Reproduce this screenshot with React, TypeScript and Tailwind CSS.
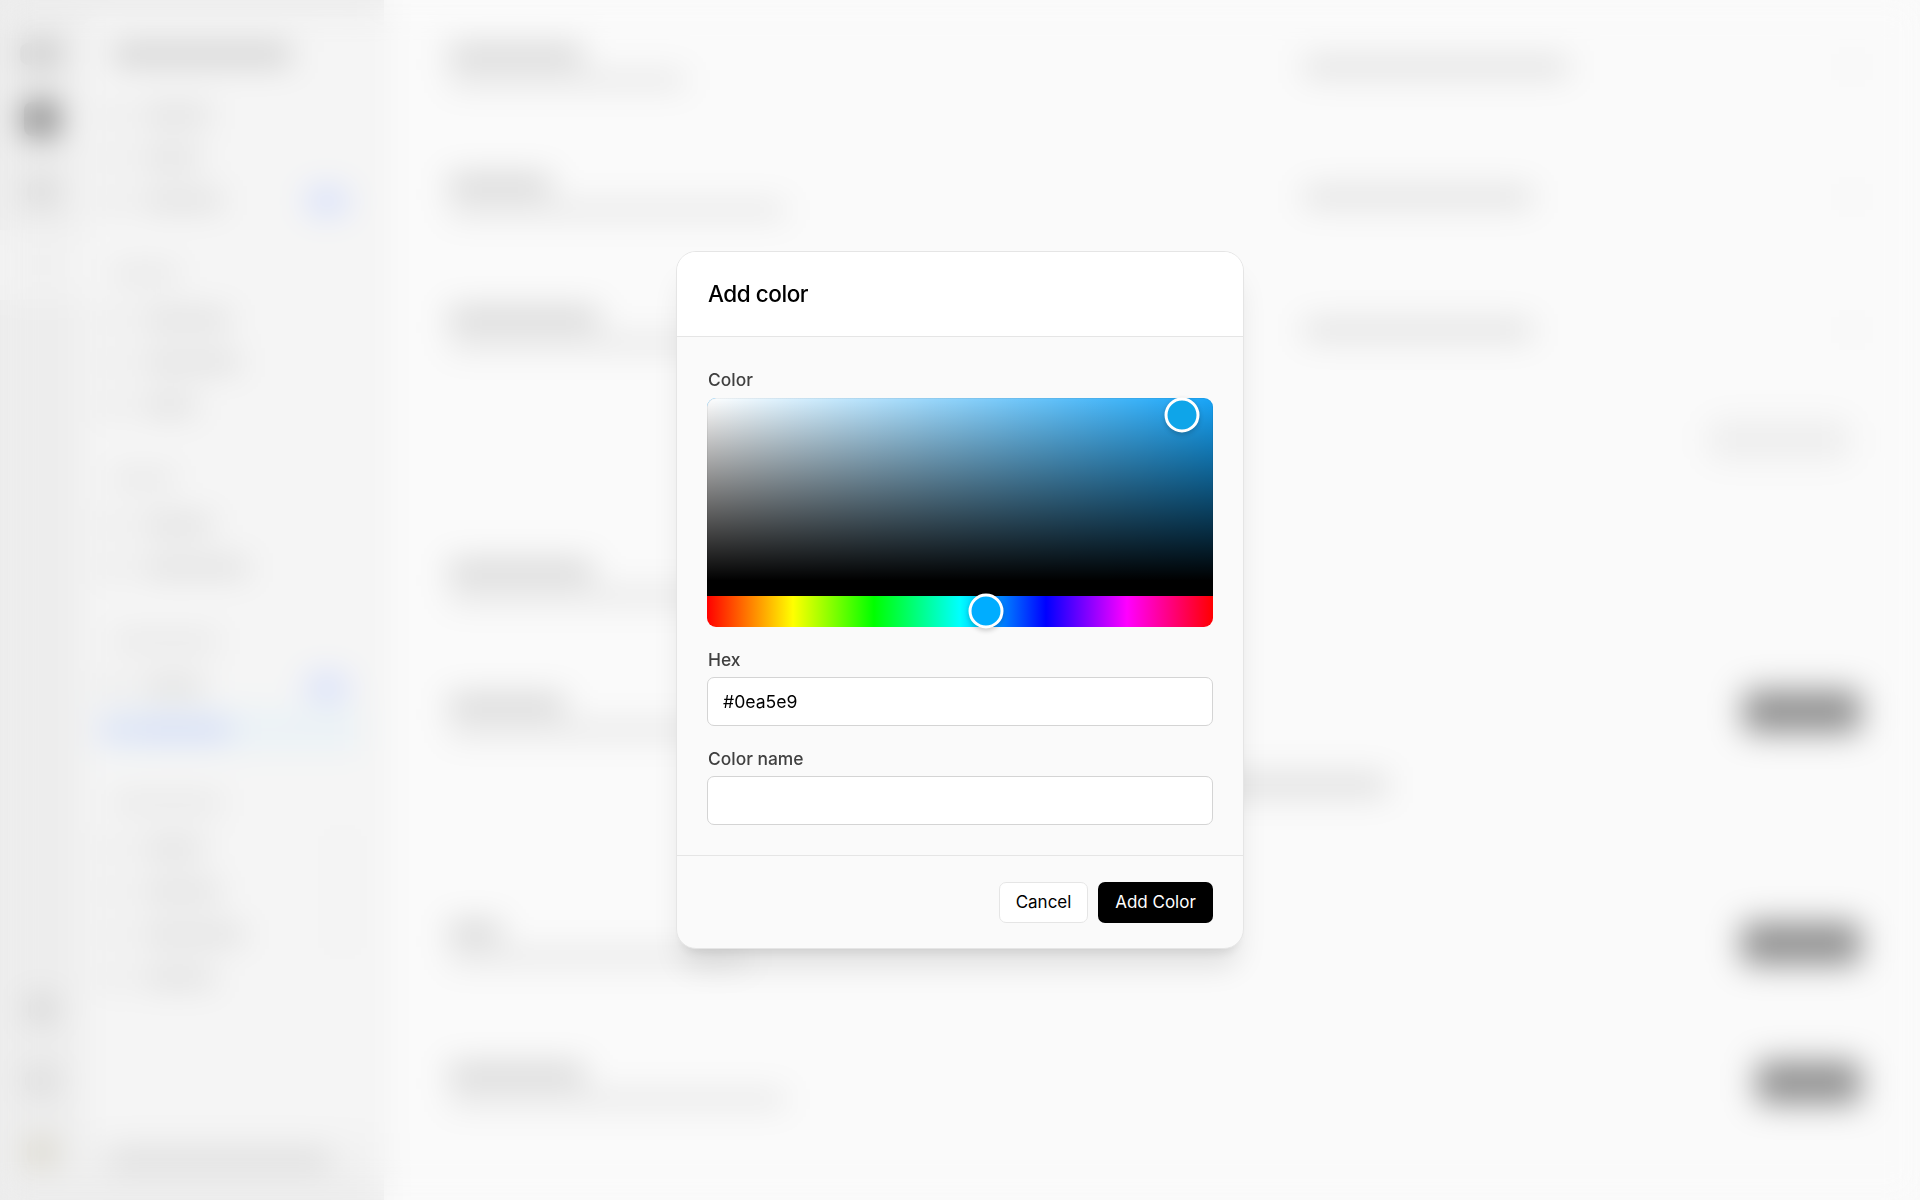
import { useState } from 'react'

const navGroups: { header?: number; items: { w: number; badge?: boolean; active?: boolean; arrow?: boolean }[] }[] = [
  { items: [{ w: 68 }, { w: 58 }, { w: 80, badge: true }] },
  { header: 66, items: [{ w: 88 }, { w: 98 }, { w: 54 }] },
  { header: 62, items: [{ w: 70 }, { w: 106 }] },
  { header: 106, items: [{ w: 62, badge: true }, { w: 86, active: true }] },
  { header: 110, items: [{ w: 62, arrow: true }, { w: 78, arrow: true }, { w: 102, arrow: true }, { w: 72 }] },
]

function RailIcon({ className }: { className: string }) {
  return <div className={`rounded-lg ${className}`} />
}

function Sidebar() {
  return (
    <aside className="flex h-full w-[384px] shrink-0 bg-[#ededed]">
      {/* Icon rail */}
      <div className="flex w-[82px] shrink-0 flex-col items-center pt-[43px] pb-[35px]">
        <RailIcon className="h-[22px] w-[42px] bg-[#c3c3c3]" />
        <RailIcon className="mt-[37px] h-[34px] w-[34px] bg-[#7c7c7c]" />
        <RailIcon className="mt-[44px] h-[24px] w-[28px] bg-[#d2d2d2]" />
        <div className="mt-[26px] flex h-[70px] w-full items-center justify-center bg-[#f2f2f2]">
          <div className="h-3 w-3 bg-[#e0e0e0]" />
        </div>
        <div className="flex-1" />
        <RailIcon className="h-[24px] w-[26px] bg-[#cecece]" />
        <RailIcon className="mt-[48px] h-[24px] w-[32px] bg-[#d8d8d8]" />
        <RailIcon className="mt-[46px] h-[26px] w-[28px] bg-[#d6d2c4]" />
      </div>

      {/* Settings nav */}
      <div className="mt-[17px] mr-[5px] mb-[25px] flex flex-1 flex-col rounded-2xl bg-[#f5f5f5]">
        <div className="flex h-[76px] items-center pb-[2px] pl-[31px]">
          <div className="h-[19px] w-[178px] bg-[#cccccc]" />
        </div>
        {navGroups.map((group, i) => (
          <div key={i} className="mb-[28px]">
            {group.header && (
              <div className="flex h-[48px] items-center pl-[30px]">
                <div className="h-[14px] bg-[#e2e2e2]" style={{ width: group.header }} />
              </div>
            )}
            {group.items.map((item, j) => (
              <div key={j} className={`mr-[20px] ml-[16px] flex h-[43px] items-center rounded-md pl-[6px] ${item.active ? 'bg-[#ebf2f6]' : ''}`}>
                <div className={`h-[16px] w-[18px] ${item.active ? 'bg-[#c8d0f6]' : 'bg-[#dfdfdf]'}`} />
                <div className={`h-[15px] ${item.active ? 'ml-2 bg-[#ccd4f6]' : 'ml-[20px] bg-[#d9d9d9]'}`} style={{ width: item.active ? item.w + 14 : item.w }} />
                {item.badge && <div className="mr-[10px] ml-auto h-[26px] w-[44px] rounded-full bg-[#d6dffb]" />}
                {item.arrow && <div className="mr-[10px] ml-auto h-[14px] w-[14px] bg-[#e8e8e8]" />}
              </div>
            ))}
          </div>
        ))}
        <div className="mt-auto flex h-[42px] items-center rounded-b-2xl bg-[#f2f2f2] pt-[12px] pl-[26px]">
          <div className="h-[16px] w-[222px] bg-[#d8d8d8]" />
        </div>
      </div>
    </aside>
  )
}

function Row({ className, title, desc, children }: { className: string; title: number; desc: number; children?: any }) {
  return (
    <div className={`flex justify-between ${className}`}>
      <div className="flex flex-col gap-[12px] pt-[16px]">
        <div className="h-[16px] bg-[#cccccc]" style={{ width: title }} />
        <div className="h-[12px] bg-[#dedede]" style={{ width: desc }} />
      </div>
      <div className="flex flex-col items-end">{children}</div>
    </div>
  )
}

function FontSelect({ w }: { w: number }) {
  return (
    <div className="flex h-[73px] w-[557px] items-center justify-between">
      <div className="h-[16px] bg-[#dadada]" style={{ width: w }} />
      <div className="mr-[2px] h-[14px] w-[14px] bg-[#f0f0f0]" />
    </div>
  )
}

function SettingsPage() {
  return (
    <main className="flex-1 bg-[#fafafa] pt-[30px] pr-[59px] pl-[65px]">
      <Row className="h-[130px]" title={134} desc={236}>
        <FontSelect w={264} />
      </Row>
      <Row className="h-[133px]" title={102} desc={336}>
        <FontSelect w={228} />
      </Row>
      <Row className="h-[253px]" title={150} desc={400}>
        <FontSelect w={228} />
        <div className="mt-[55px] mr-[12px] h-[38px] w-[140px] rounded-lg bg-[#ededed]" />
      </Row>
      <Row className="h-[134px]" title={144} desc={400} />
      <Row className="h-[227px]" title={116} desc={400}>
        <div className="mt-[10px] h-[43px] w-[118px] rounded-lg bg-[#919191]" />
        <div className="mt-[43px] mr-[474px] h-[18px] w-[260px] bg-[#d8d8d8]" />
      </Row>
      <Row className="h-[142px]" title={52} desc={298}>
        <div className="mt-[15px] h-[43px] w-[120px] rounded-lg bg-[#919191]" />
      </Row>
      <Row className="h-[120px]" title={136} desc={336}>
        <div className="mt-[12px] h-[43px] w-[105px] rounded-lg bg-[#919191]" />
      </Row>
    </main>
  )
}

function ColorPicker() {
  const handle = 'absolute h-[35px] w-[35px] -translate-x-1/2 -translate-y-1/2 rounded-full border-[3px] border-white shadow-[0_2px_5px_rgba(0,0,0,0.2)]'
  return (
    <div className="flex h-[229px] w-full flex-col">
      <div className="relative flex-1 rounded-t-[9px] border-b-[15px] border-black bg-[#18a5f8] bg-[linear-gradient(to_top,#000,transparent),linear-gradient(to_right,#fff,transparent)] shadow-[inset_0_0_0_1px_rgba(0,0,0,0.05)]">
        <div className={`${handle} top-[9.2%] left-[93.9%] bg-[#0ea5e9]`} />
      </div>
      <div className="relative h-[31px] rounded-b-[9px] bg-[linear-gradient(to_right,#f00_0%,#ff0_17%,#0f0_33%,#0ff_50%,#00f_67%,#f0f_83%,#f00_100%)]">
        <div className={`${handle} top-[48%] left-[55.2%] bg-[#00adff]`} />
      </div>
    </div>
  )
}

export default function App() {
  const [hex, setHex] = useState('#0ea5e9')
  const [name, setName] = useState('')

  const label = 'pl-px text-[17.4px] leading-6 font-medium text-neutral-700'
  const input = 'h-[49px] w-full rounded-[7px] border border-neutral-300 bg-white px-[15px] text-[17.6px] text-black outline-none'

  return (
    <div className="relative h-[1200px] w-[1920px] overflow-hidden bg-[#fafafa] font-[Inter,'Liberation_Sans',sans-serif]">
      <div className="flex h-full">
        <Sidebar />
        <SettingsPage />
      </div>

      {/* Overlay + dialog */}
      <div className="absolute inset-0 flex items-center justify-center backdrop-blur-[16px]">
        <div className="flex h-[698px] w-[568px] flex-col overflow-hidden rounded-[20px] border border-neutral-200 bg-[#fafafa] shadow-[0_24px_30px_-6px_rgba(0,0,0,0.1),0_10px_12px_-7px_rgba(0,0,0,0.1)]">
          <div className="flex h-[85px] shrink-0 items-center border-b border-neutral-200 bg-white px-[30px]">
            <h2 className="pl-px text-[22.5px] font-medium tracking-[-0.02em] text-black">Add color</h2>
          </div>

          <div className="flex flex-1 flex-col px-[30px] pt-[31px]">
            <span className={label}>Color</span>
            <div className="mt-[6px]">
              <ColorPicker />
            </div>
            <label className={`mt-[21px] ${label}`} htmlFor="hex">Hex</label>
            <input id="hex" className={`mt-[5px] ${input}`} value={hex} onChange={e => setHex(e.target.value)} />
            <label className={`mt-[21px] ${label}`} htmlFor="name">Color name</label>
            <input id="name" className={`mt-[5px] ${input}`} value={name} onChange={e => setName(e.target.value)} />
          </div>

          <div className="flex h-[93px] shrink-0 items-start justify-end gap-[10px] border-t border-neutral-200 px-[30px] pt-[26px]">
            <button className="h-[41px] w-[89px] rounded-[7px] border border-neutral-200 bg-white text-[17px] text-black">Cancel</button>
            <button className="h-[41px] w-[115px] rounded-[7px] bg-black text-[17px] text-white">Add Color</button>
          </div>
        </div>
      </div>
    </div>
  )
}
